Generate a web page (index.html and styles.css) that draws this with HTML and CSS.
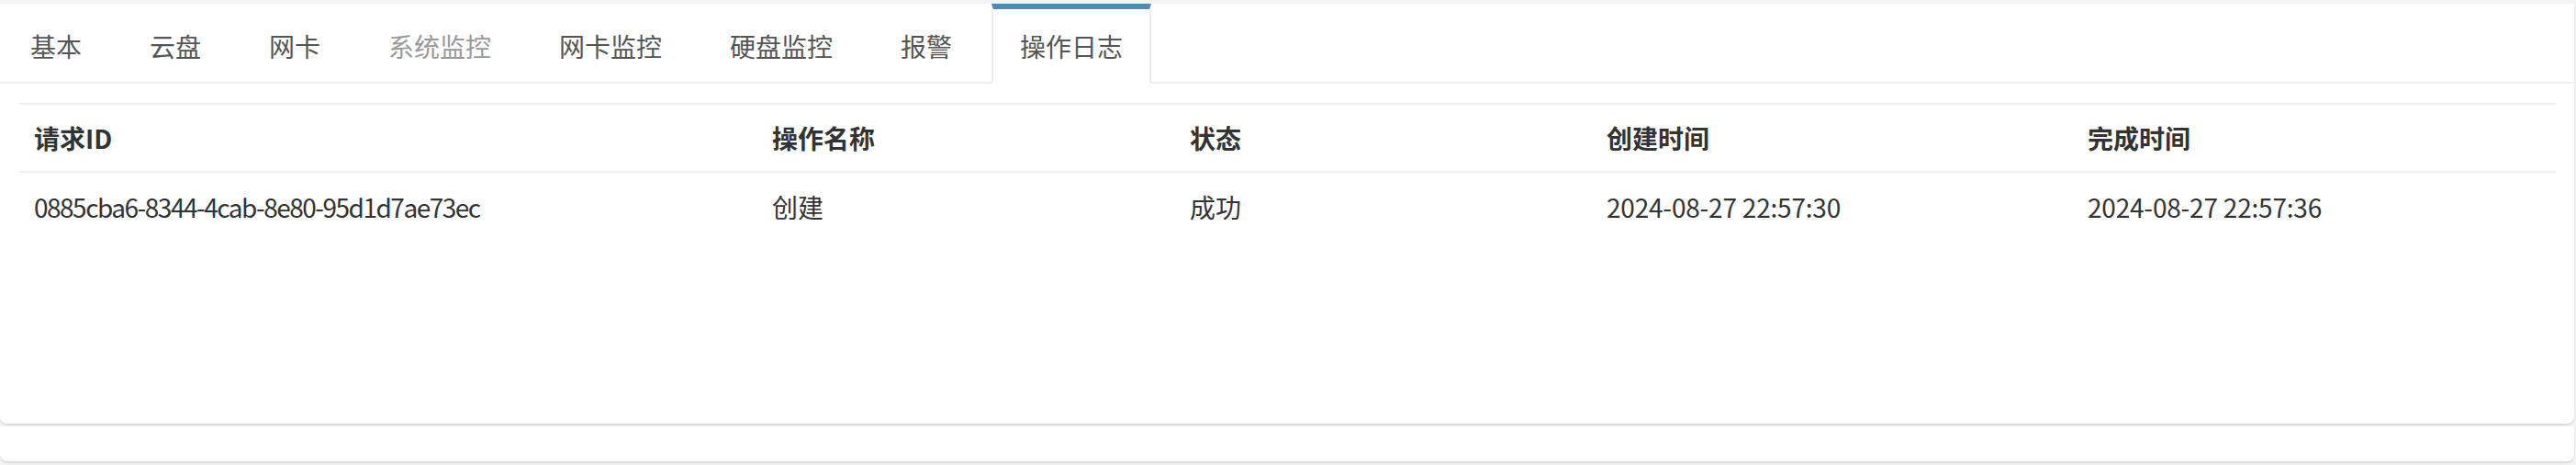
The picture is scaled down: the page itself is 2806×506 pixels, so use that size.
FILE: index.html
```html
<!DOCTYPE html>
<html lang="zh-CN">
<head>
<meta charset="utf-8">
<title>操作日志</title>
<link rel="stylesheet" href="styles.css">
</head>
<body>
<div class="panel">
  <ul class="tabs">
    <li class="tab">基本</li>
    <li class="tab">云盘</li>
    <li class="tab">网卡</li>
    <li class="tab disabled">系统监控</li>
    <li class="tab">网卡监控</li>
    <li class="tab">硬盘监控</li>
    <li class="tab">报警</li>
    <li class="tab active">操作日志</li>
  </ul>
  <div class="content">
    <table class="log-table">
      <colgroup>
        <col class="c1"><col class="c2"><col class="c3"><col class="c4"><col class="c5">
      </colgroup>
      <thead>
        <tr>
          <th>请求ID</th>
          <th>操作名称</th>
          <th>状态</th>
          <th>创建时间</th>
          <th>完成时间</th>
        </tr>
      </thead>
      <tbody>
        <tr>
          <td class="req-id">0885cba6-8344-4cab-8e80-95d1d7ae73ec</td>
          <td>创建</td>
          <td>成功</td>
          <td class="time">2024-08-27 22:57:30</td>
          <td class="time">2024-08-27 22:57:36</td>
        </tr>
      </tbody>
    </table>
  </div>
</div>
<div class="footer-box"></div>
</body>
</html>
```
FILE: styles.css
```css
html, body {
  margin: 0;
  padding: 0;
}
body {
  background: #f3f3f4;
  padding-top: 4px;
  font-family: "Noto Sans CJK SC", "Noto Sans", sans-serif;
  font-size: 28px;
  color: #333;
  width: 2806px;
  height: 506px;
  box-sizing: border-box;
  overflow: hidden;
}
.panel {
  width: 2804px;
  height: 457px;
  background: #fff;
  border-radius: 0 0 8px 8px;
  box-shadow: 0 2px 2px rgba(0, 0, 0, 0.10);
  box-sizing: border-box;
}
.tabs {
  list-style: none;
  margin: 0;
  padding: 0 0 0 2px;
  display: flex;
  border-bottom: 2px solid #f0f0f0;
}
.tab {
  margin: 0 12px -2px 0;
  padding: 20px 29px 19px;
  line-height: 40px;
  border-top: 6px solid transparent;
  border-left: 2px solid transparent;
  border-right: 2px solid transparent;
  border-bottom: 2px solid transparent;
  color: #555;
  white-space: nowrap;
}
.tab.disabled {
  color: #999;
}
.tab.active {
  border-top-color: #4f8bb9;
  border-left-color: #eeeeee;
  border-right-color: #eeeeee;
  border-bottom-color: #fff;
  background: #fff;
}
.content {
  padding: 21px 20px 0 21px;
}
.log-table {
  width: 2763px;
  border-collapse: collapse;
  table-layout: fixed;
  border-top: 2px solid #f0f0f0;
}
.c1 { width: 804px; }
.c2 { width: 455px; }
.c3 { width: 454px; }
.c4 { width: 524px; }
.c5 { width: 526px; }
.log-table th,
.log-table td {
  text-align: left;
  padding: 0 16px;
  line-height: 40px;
  white-space: nowrap;
}
.log-table th {
  height: 72px;
  font-weight: 700;
  color: #333;
  border-bottom: 2px solid #f0f0f0;
}
.log-table td {
  height: 74px;
  font-weight: 400;
  color: #333;
}
.log-table td.req-id {
  letter-spacing: -1.5px;
}
.log-table td.time {
  letter-spacing: -0.2px;
}
.footer-box {
  margin-top: 3px;
  width: 2804px;
  height: 38px;
  background: #fff;
  border-radius: 0 0 8px 8px;
  box-shadow: 0 2px 2px rgba(0, 0, 0, 0.10);
}
```
